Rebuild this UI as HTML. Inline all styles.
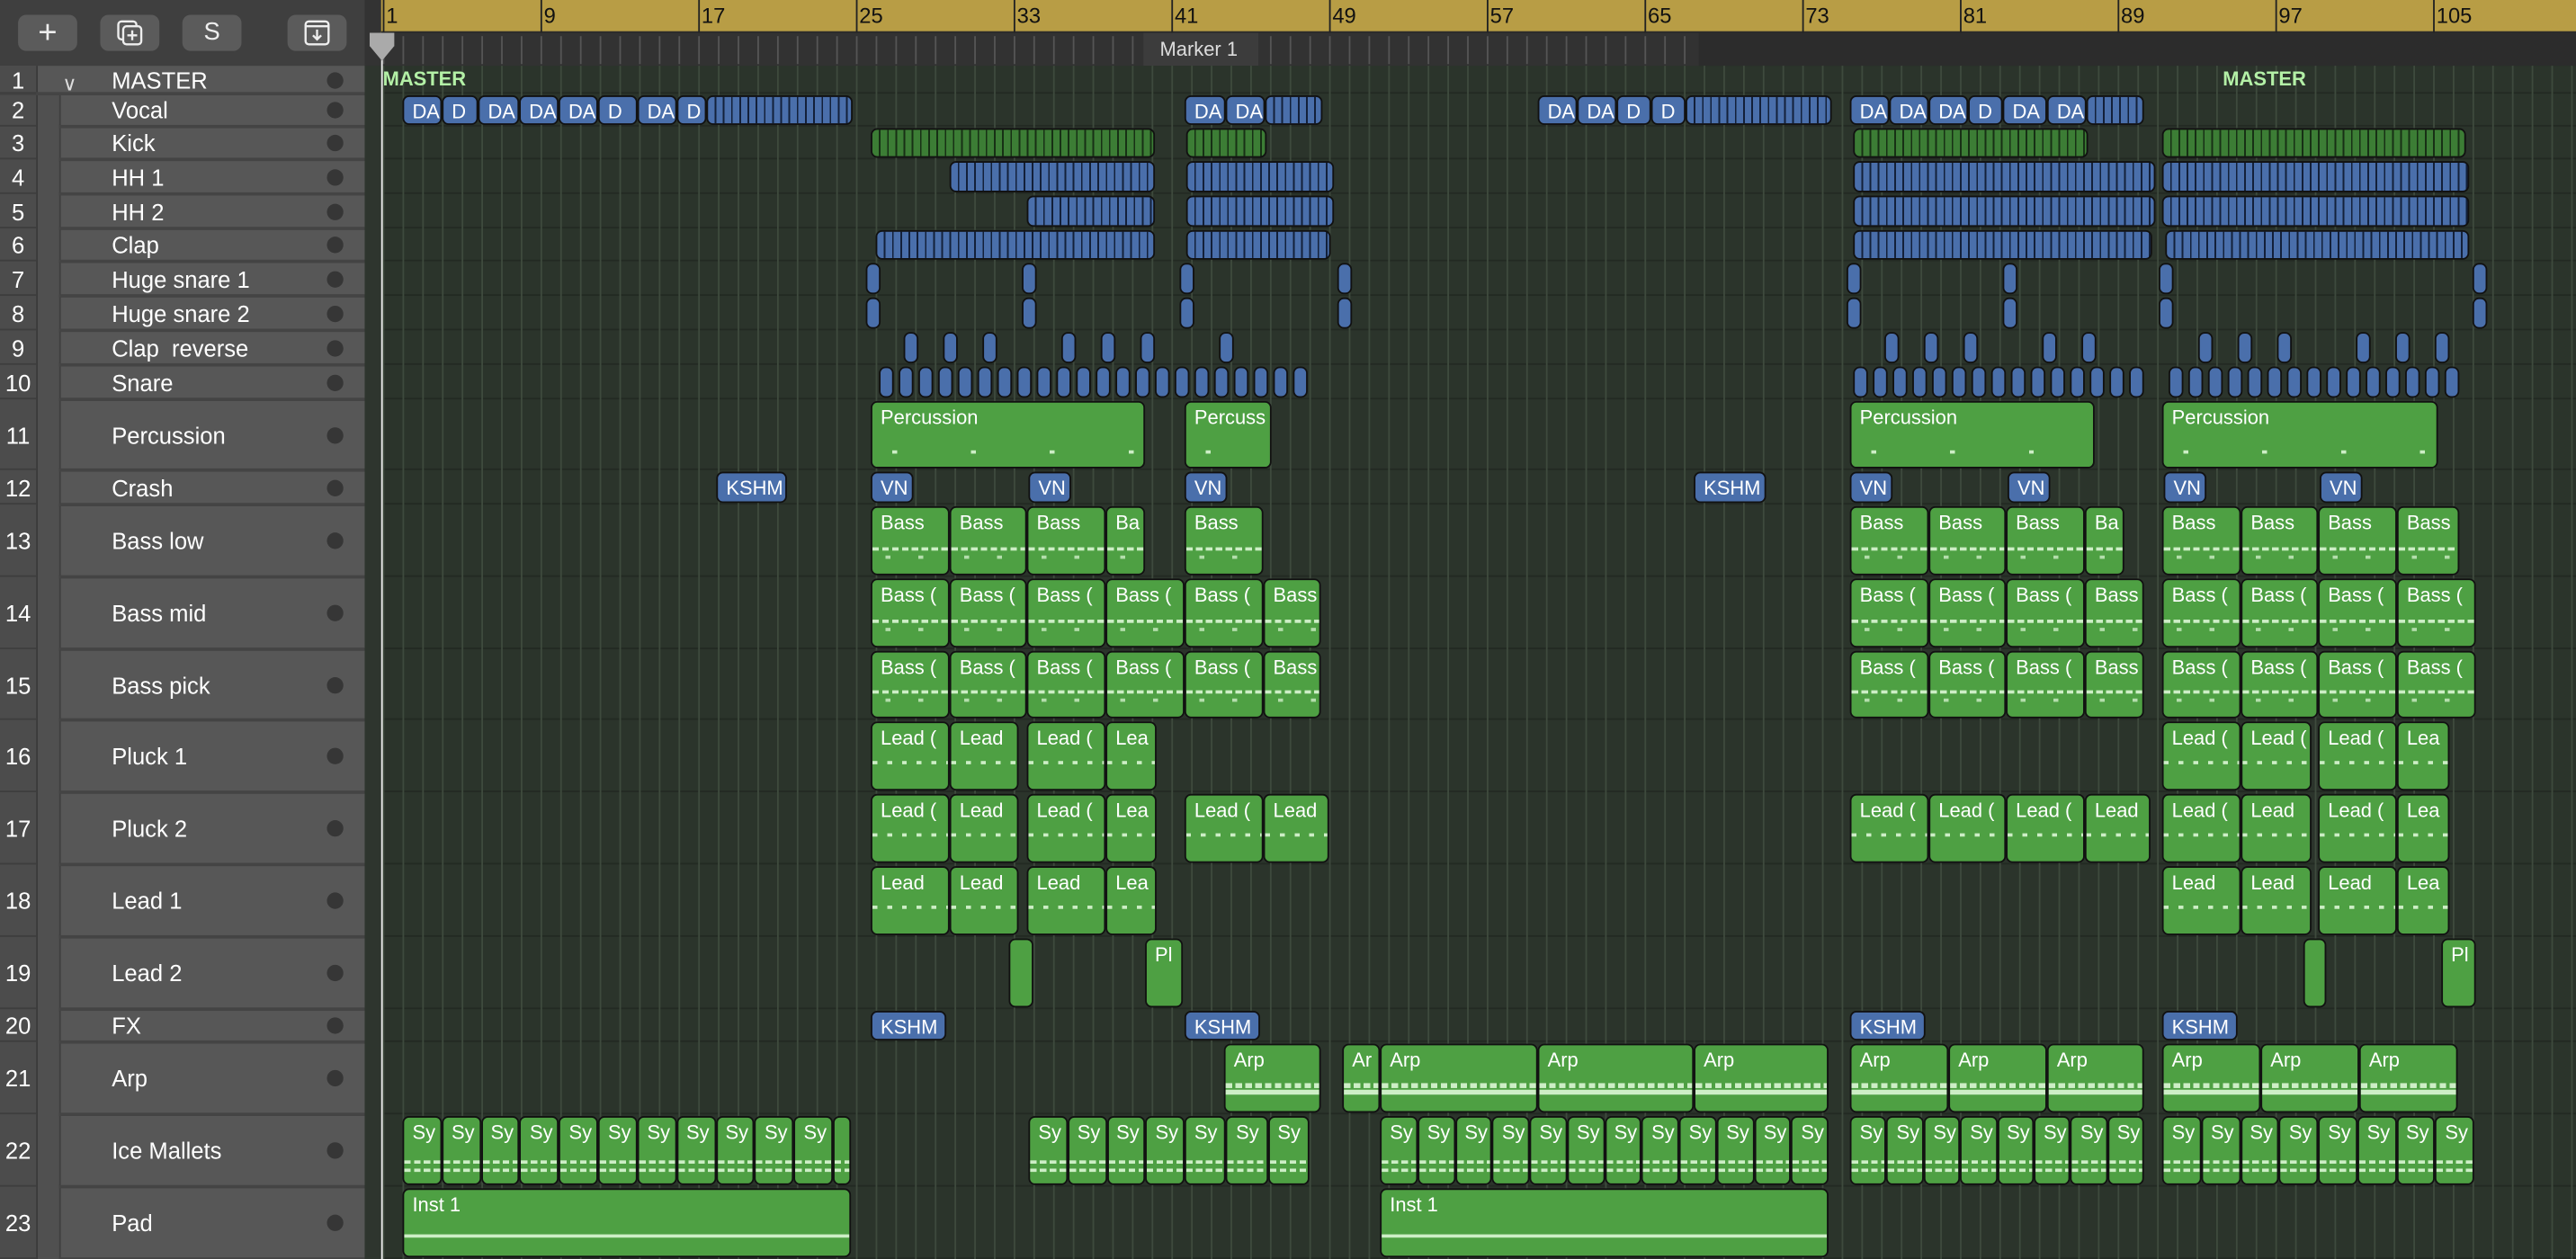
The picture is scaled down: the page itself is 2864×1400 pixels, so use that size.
<!DOCTYPE html>
<html><head><meta charset="utf-8"><style>
html,body{margin:0;padding:0;width:2864px;height:1400px;overflow:hidden;background:#2b342b}
#w{position:absolute;left:0;top:0;width:1568px;height:766px;transform:scale(1.82653,1.82768);transform-origin:0 0;font-family:"Liberation Sans",sans-serif;background:#2b342b;overflow:hidden}
.a{position:absolute;box-sizing:border-box}
.btn{position:absolute;top:9px;width:36px;height:22px;background:#5b5b5b;border-radius:5px;color:#eee;text-align:center;font-size:15px;line-height:22px}
.rg{position:absolute;box-sizing:border-box;border:1px solid #111;border-radius:4px;color:#fff;font-size:12px;overflow:hidden;white-space:nowrap;padding:2px 0 0 5px;line-height:14px}
.b{background:#4a6fab}.g{background:#4ea043}.dg{background:#3c7d35}
.st{background-image:repeating-linear-gradient(90deg,transparent 0,transparent 4px,#13203a 4px,#13203a 5px)}
.stg{background-image:repeating-linear-gradient(90deg,transparent 0,transparent 4px,#173015 4px,#173015 5px)}
.nt{position:absolute;left:0;right:0;height:2px;background-image:repeating-linear-gradient(90deg,#cdeec6 0,#cdeec6 4px,transparent 4px,transparent 6px)}
</style></head><body><div id="w">
<div class="a" style="left:0;top:0;width:232px;height:40px;background:#3f3f3f"></div>
<div class="btn" style="left:11px;font-size:20px">+</div>
<div class="btn" style="left:61px"><svg width="20" height="18" viewBox="0 0 20 18" style="margin-top:2px"><rect x="3" y="2" width="11" height="11" rx="2" fill="none" stroke="#eee" stroke-width="1.3"/><rect x="6" y="5" width="11" height="11" rx="2" fill="#5b5b5b" stroke="#eee" stroke-width="1.3"/><path d="M11.5 7.5v6M8.5 10.5h6" stroke="#eee" stroke-width="1.3"/></svg></div>
<div class="btn" style="left:111px">S</div>
<div class="btn" style="left:175px"><svg width="20" height="18" viewBox="0 0 20 18" style="margin-top:2px"><rect x="3" y="2" width="14" height="14" rx="2" fill="none" stroke="#eee" stroke-width="1.3"/><path d="M3 5h14M10 7v6M7.5 10.5l2.5 2.5 2.5-2.5" fill="none" stroke="#eee" stroke-width="1.3"/></svg></div>
<div class="a" style="left:222px;top:0;width:11px;height:40px;background:#333"></div>
<div class="a" id="ruler" style="left:232px;top:0;width:1336px;height:20px;background:#b89d45;border-bottom:1px solid #2a2a2a"></div>
<div class="a" id="mk" style="left:232px;top:20px;width:1336px;height:20px;background:#323232"></div>
<div class="a" style="left:696px;top:20px;width:70px;height:20px;background:#3c3c3c;color:#ddd;font-size:12px;line-height:20px;padding-left:10px">Marker 1</div>
<div class="a" style="left:1034px;top:20px;width:534px;height:20px;background:#2c2c2c"></div>
<div class="a" style="left:0;top:40px;width:222px;height:726px;background:#575757"></div>
<div class="a" style="left:0;top:40px;width:22px;height:726px;background:#4c4c4c"></div>
<div class="a" style="left:22px;top:40px;width:1px;height:726px;background:#3a3a3a"></div>
<div class="a" style="left:23px;top:57px;width:14px;height:709px;background:#505050"></div>
<div class="a" style="left:36px;top:57px;width:1px;height:709px;background:#3f3f3f"></div>
<div class="a" style="left:222px;top:40px;width:10px;height:726px;background:#2e352e"></div>
<div id="tl"></div>
<div id="grid"></div>
<div id="regs"></div>
<div class="a" style="left:233px;top:41px;color:#b3f0a6;font-weight:bold;font-size:12px;">MASTER</div>
<div class="a" style="left:1353px;top:41px;color:#b3f0a6;font-weight:bold;font-size:12px;">MASTER</div>
<div class="a" style="left:232px;top:22px;width:1px;height:744px;background:#eee"></div>
<svg class="a" style="left:223px;top:20px" width="19" height="20"><path d="M2 0h15v8l-7.5 9-7.5-9z" fill="#aaa"/></svg>
</div>
<script>
const rows=[[40,57,'MASTER'],[57,77,'Vocal'],[77,97,'Kick'],[97,118,'HH 1'],[118,139,'HH 2'],[139,159,'Clap'],[159,180,'Huge snare 1'],[180,201,'Huge snare 2'],[201,222,'Clap  reverse'],[222,243,'Snare'],[243,286,'Percussion'],[286,307,'Crash'],[307,351,'Bass low'],[351,395,'Bass mid'],[395,438,'Bass pick'],[438,482,'Pluck 1'],[482,526,'Pluck 2'],[526,570,'Lead 1'],[570,614,'Lead 2'],[614,634,'FX'],[634,678,'Arp'],[678,722,'Ice Mallets'],[722,766,'Pad']];
let h='';
rows.forEach((r,i)=>{const[t,b,n]=r;const c=(t+b)/2;
h+=`<div class="a" style="left:0;top:${c-8}px;width:22px;text-align:center;color:#fff;font-size:14px;line-height:16px">${i+1}</div>`;
h+=`<div class="a" style="left:68px;top:${c-8}px;color:#fff;font-size:14px;line-height:16px;white-space:pre">${n}</div>`;
h+=`<div class="a" style="left:199px;top:${c-5}px;width:10px;height:10px;border-radius:50%;background:#363636"></div>`;
h+=`<div class="a" style="left:${i==0?0:36}px;top:${b-1}px;width:${i==0?222:186}px;height:2px;background:#444"></div>`;
h+=`<div class="a" style="left:0;top:${b-1}px;width:22px;height:1px;background:#3e3e3e"></div>`;
h+=`<div class="a" style="left:232px;top:${b-1}px;width:1336px;height:1px;background:#232a23"></div>`;
});
h+=`<div class="a" style="left:38px;top:44px;color:#ddd;font-size:12px">&#8744;</div>`;
document.getElementById('tl').innerHTML=h;
let g='',ru='',mk='';
for(let x=233;x<1568;x+=12){g+=`<div class="a" style="left:${x}px;top:40px;width:1px;height:726px;background:#3e4a3d"></div>`;mk+=`<div class="a" style="left:${x-232}px;top:2px;width:1px;height:17px;background:#555"></div>`;}
for(let bar=1;bar<=105;bar+=8){const x=233+(bar-1)*12;ru+=`<div class="a" style="left:${x-232}px;top:0;width:1px;height:20px;background:#222"></div><div class="a" style="left:${x-230}px;top:2px;font-size:13px;color:#111">${bar}</div>`;}
document.getElementById('grid').innerHTML=g;document.getElementById('ruler').innerHTML=ru;document.getElementById('mk').innerHTML=mk;
const R=i=>rows[i-1];
let o='';
function reg(row,x1,x2,cls,txt,notes,dy0,dy1){const[t,b]=R(row);const top=t+(dy0||1),bt=b-(dy1||1);o+=`<div class="rg ${cls}" style="left:${x1}px;top:${top}px;width:${x2-x1}px;height:${bt-top}px">${txt||''}${notes?notes:''}</div>`;}
const nb='<div class="nt" style="top:60%"></div><div class="nt" style="top:72%;opacity:.8;background-image:repeating-linear-gradient(90deg,transparent 0,transparent 8px,#cdeec6 8px,#cdeec6 11px,transparent 11px,transparent 20px)"></div>';
const ns='<div class="nt" style="top:65%"></div><div class="nt" style="top:78%"></div>';
function seq(row,xs,cls,txts,notes){for(let i=0;i<xs.length-1;i++)reg(row,xs[i],xs[i+1],cls,txts[i]||'',notes);}
seq(2,[245,269,291,316,340,364,388,412,430],'b',['DA','D','DA','DA','DA','D','DA','D']);reg(2,430,519,'b st','');
seq(2,[721,746,770],'b',['DA','DA']);reg(2,770,805,'b st','');
seq(2,[936,960,984,1005,1026],'b',['DA','DA','D','D']);reg(2,1026,1115,'b st','');
seq(2,[1126,1150,1174,1198,1219,1246,1270],'b',['DA','DA','DA','D','DA','DA']);reg(2,1270,1305,'b st','');
[[530,703],[722,771],[1128,1271],[1316,1501]].forEach(a=>reg(3,a[0],a[1],'dg stg',''));
[[578,703],[722,812],[1128,1312],[1316,1503]].forEach(a=>reg(4,a[0],a[1],'b st',''));
[[625,703],[722,812],[1128,1312],[1316,1503]].forEach(a=>reg(5,a[0],a[1],'b st',''));
[[533,703],[722,810],[1128,1310],[1318,1503]].forEach(a=>reg(6,a[0],a[1],'b st',''));
[527,622,718,814,1124,1219,1314,1505].forEach(x=>{reg(7,x,x+9,'b','');reg(8,x,x+9,'b','');});
[550,574,598,646,670,694,742,1147,1171,1195,1243,1267,1338,1362,1386,1434,1458,1482].forEach(x=>reg(9,x,x+9,'b',''));
[[535,807],[1128,1307],[1320,1500]].forEach(a=>{for(let x=a[0];x<=a[1]-9;x+=12){reg(10,x,x+9,'b','');}});
const pn='<div class="nt" style="top:75%;background-image:repeating-linear-gradient(90deg,transparent 0,transparent 12px,#cdeec6 12px,#cdeec6 15px,transparent 15px,transparent 48px)"></div>';
reg(11,530,697,'g','Percussion',pn);reg(11,721,774,'g','Percuss',pn);reg(11,1126,1275,'g','Percussion',pn);reg(11,1316,1484,'g','Percussion',pn);
reg(12,436,479,'b','KSHM');[530,626,721,1126,1222,1317,1412].forEach(x=>reg(12,x,x+26,'b','VN'));reg(12,1031,1075,'b','KSHM');
seq(13,[530,578,625,673,697],'g',['Bass','Bass','Bass','Ba'],nb);reg(13,721,769,'g','Bass',nb);
seq(13,[1126,1174,1221,1269,1293],'g',['Bass','Bass','Bass','Ba'],nb);seq(13,[1316,1364,1411,1459,1497],'g',['Bass','Bass','Bass','Bass'],nb);
[14,15].forEach(r=>{seq(r,[530,578,625,673,721,769,804],'g',['Bass (','Bass (','Bass (','Bass (','Bass (','Bass'],nb);seq(r,[1126,1174,1221,1269,1305],'g',['Bass (','Bass (','Bass (','Bass'],nb);seq(r,[1316,1364,1411,1459,1507],'g',['Bass (','Bass (','Bass (','Bass ('],nb);});
const ln='<div class="nt" style="top:58%;background-image:repeating-linear-gradient(90deg,#cdeec6 0,#cdeec6 3px,transparent 3px,transparent 9px)"></div>';
function lead(r,a){reg(r,530,578,'g',a[0],ln);reg(r,578,620,'g',a[1],ln);reg(r,625,673,'g',a[2],ln);reg(r,673,704,'g',a[3],ln);}
lead(16,['Lead (','Lead','Lead (','Lea']);seq(16,[1316,1364,1407],'g',['Lead (','Lead ('],ln);seq(16,[1411,1459,1491],'g',['Lead (','Lea'],ln);
lead(17,['Lead (','Lead','Lead (','Lea']);seq(17,[721,769,809],'g',['Lead (','Lead'],ln);seq(17,[1126,1174,1221,1269,1309],'g',['Lead (','Lead (','Lead (','Lead'],ln);seq(17,[1316,1364,1407],'g',['Lead (','Lead'],ln);seq(17,[1411,1459,1491],'g',['Lead (','Lea'],ln);
lead(18,['Lead','Lead','Lead','Lea']);seq(18,[1316,1364,1407],'g',['Lead','Lead'],ln);seq(18,[1411,1459,1491],'g',['Lead','Lea'],ln);
reg(19,614,629,'g','');reg(19,697,720,'g','Pl');reg(19,1402,1416,'g','');reg(19,1486,1507,'g','Pl');
[530,721,1126,1316].forEach(x=>reg(20,x,x+46,'b','KSHM'));
const an='<div class="nt" style="top:58%;height:3px"></div><div class="nt" style="top:68%;height:3px;background-image:none;background:#cdeec6"></div>';
seq(21,[745,804],'g',['Arp'],an);seq(21,[817,840,936,1031,1113],'g',['Ar','Arp','Arp','Arp'],an);seq(21,[1126,1186,1246,1305],'g',['Arp','Arp','Arp'],an);seq(21,[1316,1376,1436,1496],'g',['Arp','Arp','Arp'],an);
function sy(x1,x2,n){const w=(x2-x1)/n;for(let i=0;i<n;i++)reg(22,x1+i*w,x1+(i+1)*w,'g',w>14?'Sy':'',ns);}
sy(245,507,11);reg(22,507,518,'g','',ns);sy(626,721,4);sy(721,797,3);sy(840,1113,12);sy(1126,1305,8);sy(1316,1506,8);
const pd='<div class="nt" style="top:68%;height:2px;background-image:none;background:#cdeec6"></div>';
reg(23,245,518,'g','Inst 1',pd);reg(23,840,1113,'g','Inst 1',pd);
document.getElementById('regs').innerHTML=o;
</script>
</body></html>
